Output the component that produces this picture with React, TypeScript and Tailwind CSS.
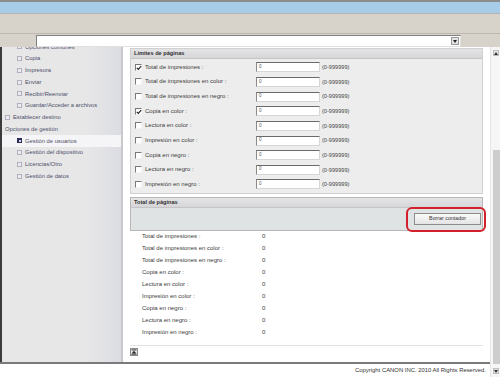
import React from "react";

const FONT = { fontFamily: '"Liberation Sans", Arial, sans-serif' };

const limitRows: { label: string; checked: boolean }[] = [
  { label: "Total de impresiones :", checked: true },
  { label: "Total de impresiones en color :", checked: false },
  { label: "Total de impresiones en negro :", checked: false },
  { label: "Copia en color :", checked: true },
  { label: "Lectura en color :", checked: false },
  { label: "Impresión en color :", checked: false },
  { label: "Copia en negro :", checked: false },
  { label: "Lectura en negro :", checked: false },
  { label: "Impresión en negro :", checked: false },
];

const totalRows = [
  "Total de impresiones :",
  "Total de impresiones en color :",
  "Total de impresiones en negro :",
  "Copia en color :",
  "Lectura en color :",
  "Impresión en color :",
  "Copia en negro :",
  "Lectura en negro :",
  "Impresión en negro :",
];

type NavItem = { label: string; level: 0 | 1 | 2; active?: boolean };

const navItems: NavItem[] = [
  { label: "Opciones comunes", level: 2 },
  { label: "Copia", level: 2 },
  { label: "Impresora", level: 2 },
  { label: "Enviar", level: 2 },
  { label: "Recibir/Reenviar", level: 2 },
  { label: "Guardar/Acceder a archivos", level: 2 },
  { label: "Establecer destino", level: 1 },
  { label: "Opciones de gestión", level: 0 },
  { label: "Gestión de usuarios", level: 2, active: true },
  { label: "Gestión del dispositivo", level: 2 },
  { label: "Licencias/Otro", level: 2 },
  { label: "Gestión de datos", level: 2 },
];

function Bullet({ active }: { active?: boolean }) {
  if (active) {
    return (
      <span className="flex h-[5px] w-[5px] items-center justify-center bg-[#2c2c58]">
        <span className="h-[2px] w-[2px] bg-[#d8d8e8]" />
      </span>
    );
  }
  return <span className="h-[5px] w-[5px] border border-[#b0b0c0] bg-[#ececf0]" />;
}

function Sidebar() {
  return (
    <div className="relative h-full w-[123px] shrink-0 overflow-hidden border-l-2 border-[#3c3c3c] bg-[linear-gradient(to_right,#e7e7e8_70%,#dbdce2)]">
      <div className="-mt-[6px] flex flex-col">
        {navItems.map((it) => (
          <div
            key={it.label}
            className={
              "flex h-[11.75px] items-center text-[5.8px] text-[#4e4e68] " +
              (it.active ? "bg-[#f5f5f7]" : "")
            }
          >
            {it.level === 2 && (
              <span className="ml-[15px] mr-[3px] flex w-[5px]">
                <Bullet active={it.active} />
              </span>
            )}
            {it.level === 1 && (
              <span className="ml-[3px] mr-[3px] flex w-[5px]">
                <Bullet />
              </span>
            )}
            {it.level === 0 && <span className="ml-[3px]" />}
            <span className="whitespace-nowrap">{it.label}</span>
          </div>
        ))}
      </div>
      <div className="absolute right-0 top-0 h-full w-[2px] bg-[#c9c9cc]" />
    </div>
  );
}

function Checkbox({ checked }: { checked: boolean }) {
  return (
    <span className="relative flex h-[7px] w-[7px] items-center justify-center border border-b-[#f4f4f4] border-l-[#7a7a7a] border-r-[#f4f4f4] border-t-[#7a7a7a] bg-white">
      {checked && (
        <svg width="6" height="6" viewBox="0 0 6 6" className="absolute left-0 top-0">
          <path d="M0.8 2.8 L2.3 4.3 L5.2 1.2" stroke="#222" strokeWidth="1.2" fill="none" />
        </svg>
      )}
    </span>
  );
}

function PanelHeader({ title }: { title: string }) {
  return (
    <div className="flex h-[10px] items-center border-b border-[#c4c4c4] bg-[linear-gradient(to_bottom,#e4e4e6,#d6d6da)] pl-[3px] text-[5.6px] font-bold text-[#303030]">
      {title}
    </div>
  );
}

function Content() {
  return (
    <div className="flex h-full flex-1 flex-col bg-white pl-[7px] pr-[7px] pt-[1px]">
      {/* Límites de páginas */}
      <div className="border border-[#d0d0d0] bg-[#ededed]">
        <PanelHeader title="Límites de páginas" />
        <div className="flex flex-col pb-[1px] pt-[1px]">
          {limitRows.map((r) => (
            <div key={r.label} className="flex h-[14.65px] items-center pl-[4px]">
              <Checkbox checked={r.checked} />
              <span className="ml-[3px] w-[111px] whitespace-nowrap text-[6px] text-[#3c3c3c]">
                {r.label}
              </span>
              <span className="flex h-[10px] w-[64px] items-center border border-b-[#d6d6d6] border-l-[#8a8a8a] border-r-[#d6d6d6] border-t-[#6a6a6a] bg-white pl-[2px] text-[4.5px] text-[#555]">
                0
              </span>
              <span className="ml-[2px] text-[5.6px] text-[#444]">(0-999999)</span>
            </div>
          ))}
        </div>
      </div>

      {/* Total de páginas */}
      <div className="relative mt-[3px] border border-[#b8b8b8]">
        <PanelHeader title="Total de páginas" />
        <div className="flex h-[22px] items-center justify-end bg-[#dfe3e3] pr-[1px]">
          <button className="flex h-[12px] w-[67px] items-center justify-center border border-[#8c8c8c] bg-[linear-gradient(to_bottom,#fafafa,#e4e4e4)] text-[5.3px] text-[#333]">
            Borrar contador
          </button>
        </div>
        <div className="pointer-events-none absolute right-[-4px] top-[9px] h-[25px] w-[80px] rounded-[6px] border-2 border-[#d3202c]" />
      </div>

      <div className="flex flex-col">
        {totalRows.map((l) => (
          <div key={l} className="flex h-[12px] items-center pl-[12px] text-[6px] text-[#3c3c3c]">
            <span className="w-[120px] whitespace-nowrap">{l}</span>
            <span>0</span>
          </div>
        ))}
      </div>

      <div className="mt-[6px] border-t border-[#e2e2e2] pt-[2px]">
        <span className="flex h-[8px] w-[8px] items-center justify-center border border-[#8a8a8a] bg-[#e8e8e8]">
          <svg width="6" height="6" viewBox="0 0 6 6">
            <rect x="0.5" y="0.5" width="5" height="0.9" fill="#222" />
            <path d="M3 1.8 L5.4 4.6 L0.6 4.6 Z" fill="#222" />
            <rect x="0.5" y="4.8" width="5" height="0.8" fill="#222" />
          </svg>
        </span>
      </div>
    </div>
  );
}

function Scrollbar() {
  return (
    <div className="flex h-full w-[10px] shrink-0 flex-col border-l border-[#e6e6e6] bg-[#f6f6f6]">
      <div className="ml-[2px] mt-[3px] flex h-[6px] w-[6px] items-center justify-center border border-[#bdbdbd] bg-[#e8e8e8]">
        <svg width="4" height="3" viewBox="0 0 4 3">
          <path d="M2 0 L4 3 L0 3 Z" fill="#333" />
        </svg>
      </div>
      <div className="mt-[94px] ml-[2px] h-[214px] w-[8px] bg-[#cdcdcd]" />
      <div className="ml-[2px] mt-[4px] flex h-[6px] w-[6px] items-center justify-center border border-[#bdbdbd] bg-[#e8e8e8]">
        <svg width="4" height="3" viewBox="0 0 4 3">
          <path d="M0 0 L4 0 L2 3 Z" fill="#333" />
        </svg>
      </div>
    </div>
  );
}

export default function App() {
  return (
    <div className="flex h-[377px] w-[500px] flex-col overflow-hidden bg-white" style={FONT}>
      <div className="h-[2px] bg-[#8c8c8c]" />
      <div className="h-[12px] border-b border-[#b4b4b4] bg-[#a6cce8]" />
      <div className="h-[19px] bg-[#d7d2ca]" />
      <div className="flex h-[14px] items-start border-t border-[#bcb8b0] bg-[#d7d2ca] pl-[36px] pt-[1px]">
        <div className="flex h-[12px] w-[425px] items-center justify-end border border-b-[#e0e0e0] border-l-[#808080] border-r-[#e0e0e0] border-t-[#808080] bg-white pr-[1px]">
          <span className="flex h-[8px] w-[8px] items-center justify-center border border-[#9a9a9a] bg-[#e2e2e2]">
            <svg width="4" height="3" viewBox="0 0 4 3">
              <path d="M0 0 L4 0 L2 3 Z" fill="#222" />
            </svg>
          </span>
        </div>
      </div>
      <div className="flex min-h-0 flex-1">
        <div className="flex min-w-0 flex-1 flex-col">
          <div className="flex min-h-0 flex-1">
            <Sidebar />
            <Content />
          </div>
          <div className="flex h-[15px] items-center justify-end border-t-2 border-[#7a7a7a] bg-white pr-[4px] text-[5.9px] text-[#333]">
            Copyright CANON INC. 2010 All Rights Reserved.
          </div>
        </div>
        <Scrollbar />
      </div>
    </div>
  );
}
